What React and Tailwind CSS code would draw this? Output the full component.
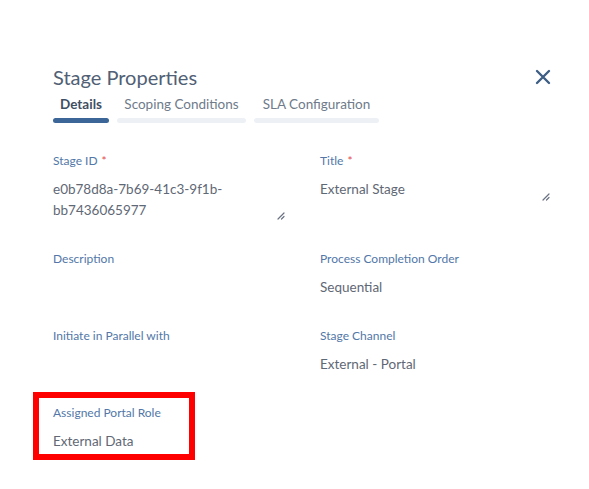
import React from 'react';

const ResizeIcon = () => (
  <svg width="9" height="9" viewBox="0 0 9 9" className="text-gray-500">
    <path d="M8 2 L2 8 M8 5.5 L5.5 8" stroke="currentColor" strokeWidth="1.2" strokeLinecap="round" />
  </svg>
);

const Field = ({ label, required, children }) => (
  <div>
    <div className="text-[12px] leading-4 text-[#5277a8]">
      {label}
      {required && <span className="ml-1 text-[#e5484d]">*</span>}
    </div>
    <div className="mt-[10px] min-h-[21px] text-[13.5px] leading-[21px] text-[#5f6875]">{children}</div>
  </div>
);

const tabs = [
  { name: 'Details', w: 'w-[56px]', active: true },
  { name: 'Scoping Conditions', w: 'w-[129px]' },
  { name: 'SLA Configuration', w: 'w-[125px]' },
];

export default function App() {
  return (
    <div className="w-[589px] h-[489px] bg-white pl-[53px] pt-[64px] font-['Lato',sans-serif]">
      <div className="flex items-center justify-between pr-[38px]">
        <h1 className="text-[20px] leading-[26px] text-[#506075]">Stage Properties</h1>
        <svg width="16" height="16" viewBox="0 0 16 16" className="text-[#3e5f85]">
          <path d="M2 2 L14 14 M14 2 L2 14" stroke="currentColor" strokeWidth="2.4" strokeLinecap="round" />
        </svg>
      </div>

      <div className="mt-[5px] flex gap-[8px]">
        {tabs.map((t) => (
          <div key={t.name} className={t.w}>
            <div
              className={`text-center text-[13.5px] leading-[18px] ${
                t.active ? 'font-bold text-[#3f4f63]' : 'text-[#6f7b8a]'
              }`}
            >
              {t.name}
            </div>
            <div
              className={`mt-[5px] h-[5px] rounded-full ${t.active ? 'bg-[#3d6698]' : 'bg-[#edf1f6]'}`}
            />
          </div>
        ))}
      </div>

      <div className="mt-[30px] grid grid-cols-[267px_230px] gap-y-[30px]">
        <Field label="Stage ID" required>
          <div className="flex w-[232px] items-end justify-between">
            <div>
              <span className="block">e0b78d8a-7b69-41c3-9f1b-</span>
              <span className="block">bb7436065977</span>
            </div>
            <div className="mb-[1px]">
              <ResizeIcon />
            </div>
          </div>
        </Field>
        <Field label="Title" required>
          <div className="flex items-start justify-between">
            <span>External Stage</span>
            <div className="mt-[13px]">
              <ResizeIcon />
            </div>
          </div>
        </Field>

        <Field label="Description" />
        <Field label="Process Completion Order">Sequential</Field>

        <Field label="Initiate in Parallel with" />
        <Field label="Stage Channel">External - Portal</Field>

        <div className="-ml-[20px] -mt-[13px] w-[162px] border-[6px] border-[#ff0000] pl-[14px] pt-[7px] pb-[2px]">
          <Field label="Assigned Portal Role">External Data</Field>
        </div>
      </div>
    </div>
  );
}
